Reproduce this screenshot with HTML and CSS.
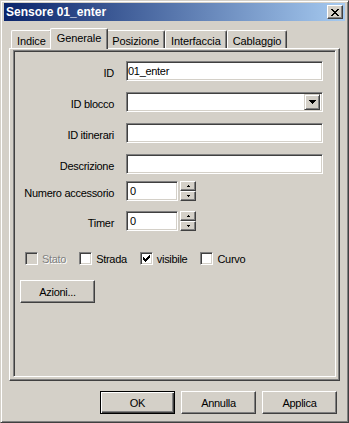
FILE: index.html
```html
<!DOCTYPE html>
<html lang="it">
<head>
  <meta charset="UTF-8">
  <title>Sensore 01_enter</title>
  <link rel="stylesheet" href="styles.css">
</head>
<body>
  <div class="window">
    <div class="titlebar">
      <span class="title">Sensore 01_enter</span>
      <span class="close">
        <svg width="8" height="7" viewBox="0 0 8 7" shape-rendering="crispEdges">
          <path d="M0 0h2v1h-2z M6 0h2v1h-2z M1 1h2v1h-2z M5 1h2v1h-2z M2 2h4v1h-4z M3 3h2v1h-2z M2 4h4v1h-4z M1 5h2v1h-2z M5 5h2v1h-2z M0 6h2v1h-2z M6 6h2v1h-2z" fill="#000"/>
        </svg>
      </span>
    </div>

    <!-- Tabs -->
    <div class="tabs">
      <div class="tab">Indice</div>
      <div class="tab active">Generale</div>
      <div class="tab">Posizione</div>
      <div class="tab">Interfaccia</div>
      <div class="tab">Cablaggio</div>
    </div>

    <div class="panel">
      <div class="frame">
        <div class="fields">
          <div class="row">
            <span class="label">ID</span>
            <input class="field" type="text" value="01_enter">
          </div>
          <div class="row">
            <span class="label">ID blocco</span>
            <div class="field select">
              <span class="select-btn">
                <svg width="7" height="4" viewBox="0 0 7 4" shape-rendering="crispEdges">
                  <path d="M0 0h7v1h-7z M1 1h5v1h-5z M2 2h3v1h-3z M3 3h1v1h-1z" fill="#000"/>
                </svg>
              </span>
            </div>
          </div>
          <div class="row">
            <span class="label">ID itinerari</span>
            <input class="field" type="text" value="">
          </div>
          <div class="row">
            <span class="label">Descrizione</span>
            <input class="field" type="text" value="">
          </div>
        </div>

        <div class="spins">
          <div class="row">
            <span class="label">Numero accessorio</span>
            <input class="field short" type="text" value="0">
            <div class="spin-btns">
              <span class="spin-btn">
                <svg width="5" height="3" viewBox="0 0 5 3" shape-rendering="crispEdges"><path d="M2 0h1v1h-1z M1 1h3v1h-3z" fill="#000"/></svg>
              </span>
              <span class="spin-btn">
                <svg width="5" height="3" viewBox="0 0 5 3" shape-rendering="crispEdges"><path d="M1 0h3v1h-3z M2 1h1v1h-1z" fill="#000"/></svg>
              </span>
            </div>
          </div>
          <div class="row">
            <span class="label">Timer</span>
            <input class="field short" type="text" value="0">
            <div class="spin-btns">
              <span class="spin-btn">
                <svg width="5" height="3" viewBox="0 0 5 3" shape-rendering="crispEdges"><path d="M2 0h1v1h-1z M1 1h3v1h-3z" fill="#000"/></svg>
              </span>
              <span class="spin-btn">
                <svg width="5" height="3" viewBox="0 0 5 3" shape-rendering="crispEdges"><path d="M1 0h3v1h-3z M2 1h1v1h-1z" fill="#000"/></svg>
              </span>
            </div>
          </div>
        </div>

        <!-- Flags -->
        <div class="checks">
          <label class="check disabled"><span class="box"></span>Stato</label>
          <label class="check"><span class="box"></span>Strada</label>
          <label class="check">
            <span class="box">
              <svg width="7" height="7" viewBox="0 0 7 7" shape-rendering="crispEdges">
                <path d="M6 0h1v1h-1z M5 1h2v1h-2z M0 2h1v1h-1z M4 2h3v1h-3z M0 3h2v1h-2z M3 3h3v1h-3z M0 4h5v1h-5z M1 5h3v1h-3z M2 6h1v1h-1z" fill="#000"/>
              </svg>
            </span>visibile</label>
          <label class="check"><span class="box"></span>Curvo</label>
        </div>

        <button class="btn azioni">Azioni...</button>
      </div>
    </div>

    <div class="footer">
      <button class="btn default">OK</button>
      <button class="btn">Annulla</button>
      <button class="btn">Applica</button>
    </div>
  </div>
</body>
</html>
```

FILE: styles.css
```css
body {
  margin: 0;
  font-family: "Liberation Sans", Arial, sans-serif;
  font-size: 11px;
  letter-spacing: -0.3px;
  color: #000;
}
.window {
  width: 349px;
  height: 423px;
  box-sizing: border-box;
  background: #d4d0c8;
  border: 1px solid;
  border-color: #d4d0c8 #404040 #404040 #d4d0c8;
  box-shadow: inset 1px 1px #fff, inset -1px -1px #808080;
  padding: 2px 3px 0 3px;
  display: flex;
  flex-direction: column;
}
.titlebar {
  height: 18px;
  background: linear-gradient(to right, #0a246a, #a6caf0);
  display: flex;
  align-items: center;
  justify-content: space-between;
  padding: 0 2px;
}
.title {
  color: #fff;
  font-weight: bold;
  font-size: 12px;
  letter-spacing: 0;
}
.close {
  width: 16px;
  height: 14px;
  box-sizing: border-box;
  background: #d4d0c8;
  border: 1px solid;
  border-color: #fff #404040 #404040 #fff;
  box-shadow: inset -1px -1px #808080;
  display: flex;
  align-items: center;
  justify-content: center;
}
.tabs {
  display: flex;
  align-items: flex-end;
  height: 20px;
  margin: 7px 5px 0;
  padding-left: 2px;
}
.tab {
  height: 18px;
  box-sizing: border-box;
  padding: 4px 5px 0;
  line-height: 13px;
  letter-spacing: -0.1px;
  border: 1px solid;
  border-bottom: none;
  border-color: #fff #404040 #404040 #fff;
  border-radius: 2px 2px 0 0;
  box-shadow: inset -1px 0 #808080;
  white-space: nowrap;
}
.tab.active {
  position: relative;
  z-index: 1;
  height: 21px;
  margin: 0 -2px -1px;
  padding: 3px 6px 0;
  background: #d4d0c8;
}
.panel {
  height: 333px;
  box-sizing: border-box;
  margin: 0 5px;
  border: 1px solid;
  border-color: #fff #404040 #404040 #fff;
  box-shadow: inset -1px -1px #808080;
  padding: 1px 3px 3px 3px;
}
.frame {
  height: 100%;
  box-sizing: border-box;
  border: 1px solid;
  border-color: #808080 #fff #fff #808080;
  box-shadow: inset 1px 1px #404040, inset -1px -1px #d4d0c8;
  padding: 10px 0 0 1px;
}
.fields {
  display: flex;
  flex-direction: column;
  gap: 11px;
}
.spins {
  display: flex;
  flex-direction: column;
  gap: 10px;
  margin-top: 7px;
}
.row {
  display: flex;
  align-items: center;
  height: 20px;
}
.label {
  width: 99px;
  margin-right: 12px;
  padding-top: 3px;
  text-align: right;
  white-space: nowrap;
}
.field {
  width: 197px;
  height: 20px;
  box-sizing: border-box;
  margin: 0;
  padding: 0 1px;
  background: #fff;
  border: 1px solid;
  border-color: #808080 #fff #fff #808080;
  box-shadow: inset 1px 1px #404040, inset -1px -1px #d4d0c8;
  font: inherit;
  letter-spacing: inherit;
  outline: none;
}
.field.short {
  width: 52px;
  padding-left: 3px;
}
.select {
  display: flex;
  justify-content: flex-end;
  align-items: center;
  padding: 0 2px;
}
.select-btn {
  width: 16px;
  height: 16px;
  box-sizing: border-box;
  border: 1px solid;
  border-color: #d4d0c8 #404040 #404040 #d4d0c8;
  box-shadow: inset 1px 1px #fff, inset -1px -1px #808080;
  background: #d4d0c8;
  display: flex;
  align-items: center;
  justify-content: center;
}
.spin-btns {
  display: flex;
  flex-direction: column;
  margin-left: 2px;
}
.spin-btn {
  width: 16px;
  height: 10px;
  box-sizing: border-box;
  border: 1px solid;
  border-color: #fff #404040 #404040 #fff;
  box-shadow: inset -1px -1px #808080;
  background: #d4d0c8;
  display: flex;
  align-items: center;
  justify-content: center;
}
.checks {
  display: flex;
  align-items: center;
  height: 13px;
  margin-top: 21px;
  padding-left: 10px;
}
.check {
  display: flex;
  align-items: center;
  margin-right: 13px;
}
.box {
  width: 13px;
  height: 13px;
  box-sizing: border-box;
  margin-right: 4px;
  background: #fff;
  border: 1px solid;
  border-color: #808080 #fff #fff #808080;
  box-shadow: inset 1px 1px #404040, inset -1px -1px #d4d0c8;
  display: flex;
  align-items: center;
  justify-content: center;
}
.check.disabled {
  color: #808080;
  text-shadow: 1px 1px #fff;
}
.check.disabled .box {
  background: #d4d0c8;
}
.btn {
  width: 75px;
  height: 23px;
  box-sizing: border-box;
  margin: 0;
  padding: 0;
  background: #d4d0c8;
  border: 1px solid;
  border-color: #fff #404040 #404040 #fff;
  box-shadow: inset -1px -1px #808080;
  font: inherit;
  letter-spacing: inherit;
  color: #000;
}
.btn.default {
  border-color: #000;
  box-shadow: inset 1px 1px #fff, inset -1px -1px #404040, inset -2px -2px #808080;
}
.azioni {
  display: block;
  margin: 15px 0 0 5px;
}
.footer {
  display: flex;
  justify-content: flex-end;
  gap: 6px;
  margin: 10px 8px 0 0;
}
```
